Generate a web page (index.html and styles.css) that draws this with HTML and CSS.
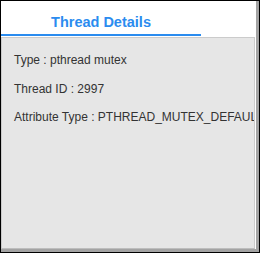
FILE: index.html
```html
<!DOCTYPE html>
<html>
<head>
<meta charset="utf-8">
<link rel="stylesheet" href="styles.css">
</head>
<body>
<div class="shot">
  <div class="window">
    <div class="tabs">
      <div class="tab active">Thread Details</div>
    </div>
    <div class="panel">
      <div class="row">Type : pthread mutex</div>
      <div class="row">Thread ID : 2997</div>
      <div class="row">Attribute Type : PTHREAD_MUTEX_DEFAULT</div>
    </div>
  </div>
</div>
</body>
</html>
```
FILE: styles.css
```css
html, body {
  margin: 0;
  padding: 0;
  background: #fff;
}
.shot {
  width: 260px;
  height: 253px;
  box-sizing: border-box;
  border: 1px solid #000;
  background: #a3a3a3;
  overflow: hidden;
}
.window {
  width: 255px;
  height: 248px;
  background: #fff;
  display: flex;
  flex-direction: column;
}
.tabs {
  height: 35px;
  flex: none;
  display: flex;
}
.tab {
  width: 200px;
  box-sizing: border-box;
  text-align: center;
  font-family: "Liberation Sans", Arial, sans-serif;
  font-weight: bold;
  font-size: 14.5px;
  color: #2b8cef;
  padding-top: 13px;
  border-bottom: 2px solid #2b8cef;
}
.panel {
  flex: 1;
  margin-top: 1px;
  margin-right: 1px;
  background: #e6e6e6;
  border: 1px solid #cbcbcb;
  border-bottom-color: #bdbdbd;
  padding: 15px 0 0 12px;
  overflow: hidden;
  white-space: nowrap;
  font-family: "Liberation Sans", Arial, sans-serif;
  font-size: 12px;
  color: #333;
}
.row {
  height: 28.5px;
  line-height: 14px;
}
```
